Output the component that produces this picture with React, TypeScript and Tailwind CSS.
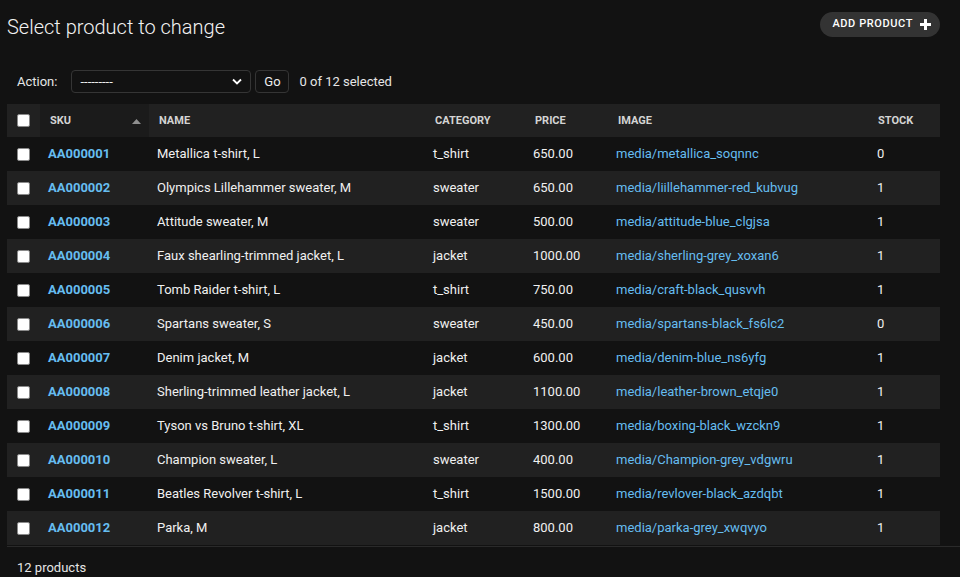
import React from "react";

type Product = {
  sku: string;
  name: string;
  category: string;
  price: string;
  image: string;
  stock: number;
};

const products: Product[] = [
  { sku: "AA000001", name: "Metallica t-shirt, L", category: "t_shirt", price: "650.00", image: "media/metallica_soqnnc", stock: 0 },
  { sku: "AA000002", name: "Olympics Lillehammer sweater, M", category: "sweater", price: "650.00", image: "media/liillehammer-red_kubvug", stock: 1 },
  { sku: "AA000003", name: "Attitude sweater, M", category: "sweater", price: "500.00", image: "media/attitude-blue_clgjsa", stock: 1 },
  { sku: "AA000004", name: "Faux shearling-trimmed jacket, L", category: "jacket", price: "1000.00", image: "media/sherling-grey_xoxan6", stock: 1 },
  { sku: "AA000005", name: "Tomb Raider t-shirt, L", category: "t_shirt", price: "750.00", image: "media/craft-black_qusvvh", stock: 1 },
  { sku: "AA000006", name: "Spartans sweater, S", category: "sweater", price: "450.00", image: "media/spartans-black_fs6lc2", stock: 0 },
  { sku: "AA000007", name: "Denim jacket, M", category: "jacket", price: "600.00", image: "media/denim-blue_ns6yfg", stock: 1 },
  { sku: "AA000008", name: "Sherling-trimmed leather jacket, L", category: "jacket", price: "1100.00", image: "media/leather-brown_etqje0", stock: 1 },
  { sku: "AA000009", name: "Tyson vs Bruno t-shirt, XL", category: "t_shirt", price: "1300.00", image: "media/boxing-black_wzckn9", stock: 1 },
  { sku: "AA000010", name: "Champion sweater, L", category: "sweater", price: "400.00", image: "media/Champion-grey_vdgwru", stock: 1 },
  { sku: "AA000011", name: "Beatles Revolver t-shirt, L", category: "t_shirt", price: "1500.00", image: "media/revlover-black_azdqbt", stock: 1 },
  { sku: "AA000012", name: "Parka, M", category: "jacket", price: "800.00", image: "media/parka-grey_xwqvyo", stock: 1 },
];

const Checkbox = () => (
  <span className="block w-[13px] h-[13px] bg-white rounded-[2px] border border-[#8a8a8a]" />
);

const App = () => {
  return (
    <div
      className="w-[960px] h-[577px] overflow-hidden bg-[#121212] text-[#f0f0f0]"
      style={{ fontFamily: "Roboto, 'Liberation Sans', sans-serif" }}
    >
      {/* header */}
      <div className="flex items-start justify-between pt-[12px] pl-[7px] pr-[20px]">
        <h1 className="pt-[3px] text-[20px] leading-[25px] font-light text-[#f2f2f2]">
          Select product to change
        </h1>
        <a className="flex items-center gap-[7px] h-[25px] pl-[12px] pr-[9px] rounded-full bg-[#333333] text-[11px] font-medium tracking-[0.6px] text-white">
          ADD PRODUCT
          <svg width="11" height="11" viewBox="0 0 11 11">
            <path d="M4 0h3v4h4v3H7v4H4V7H0V4h4z" fill="#fff" />
          </svg>
        </a>
      </div>

      {/* actions */}
      <div className="flex items-center h-[23px] mt-[30px] pl-[17px] text-[13px]">
        <label className="text-[#e6e6e6]">Action:</label>
        <div className="flex items-center justify-between w-[180px] h-[23px] ml-[14px] px-[8px] border border-[#353535] rounded-[4px] bg-[#121212]">
          <span className="text-[13px] text-[#eee]">---------</span>
          <svg width="10" height="7" viewBox="0 0 10 7">
            <path d="M1 1.5l4 4 4-4" stroke="#fff" strokeWidth="1.8" fill="none" />
          </svg>
        </div>
        <button className="ml-[4px] h-[23px] w-[34px] border border-[#353535] rounded-[4px] bg-[#121212] text-[13px] text-[#eee]">
          Go
        </button>
        <span className="ml-[10px] text-[#e6e6e6]">0 of 12 selected</span>
      </div>

      {/* table */}
      <table className="mt-[11px] ml-[7px] w-[933px] table-fixed border-collapse text-[13px]">
        <colgroup>
          <col className="w-[33px]" />
          <col className="w-[109px]" />
          <col className="w-[276px]" />
          <col className="w-[100px]" />
          <col className="w-[83px]" />
          <col className="w-[260px]" />
          <col />
        </colgroup>
        <thead>
          <tr className="h-[33px] bg-[#212121] text-[11px] font-bold text-[#d4d4d4] text-left">
            <th className="pl-[10px]">
              <Checkbox />
            </th>
            <th className="pl-[10px] pt-[2px] bg-[#1b1b1b]">
              <div className="flex items-center justify-between pr-[8px]">
                <span>SKU</span>
                <svg width="9" height="5" viewBox="0 0 9 5">
                  <path d="M4.5 0L9 5H0z" fill="#8f8f8f" />
                </svg>
              </div>
            </th>
            <th className="pl-[10px] pt-[2px]">NAME</th>
            <th className="pl-[10px] pt-[2px]">CATEGORY</th>
            <th className="pl-[10px] pt-[2px]">PRICE</th>
            <th className="pl-[10px] pt-[2px]">IMAGE</th>
            <th className="pl-[10px] pt-[2px]">STOCK</th>
          </tr>
        </thead>
        <tbody>
          {products.map((p, i) => (
            <tr
              key={p.sku}
              className={i % 2 === 0 ? "h-[34px] bg-[#121212]" : "h-[34px] bg-[#212121]"}
            >
              <td className="pl-[10px]">
                <Checkbox />
              </td>
              <td className="pl-[8px] font-bold text-[#66bdf0]">{p.sku}</td>
              <td className="pl-[8px]">{p.name}</td>
              <td className="pl-[8px]">{p.category}</td>
              <td className="pl-[8px]">{p.price}</td>
              <td className="pl-[8px] text-[#66bdf0]">{p.image}</td>
              <td className="pl-[9px]">{p.stock}</td>
            </tr>
          ))}
        </tbody>
      </table>

      {/* paginator */}
      <div className="mt-[1px] ml-[7px] border-t border-[#2a2a2a] pl-[10px] pt-[11px] text-[13px] text-[#e6e6e6]">
        12 products
      </div>
    </div>
  );
};

export default App;
